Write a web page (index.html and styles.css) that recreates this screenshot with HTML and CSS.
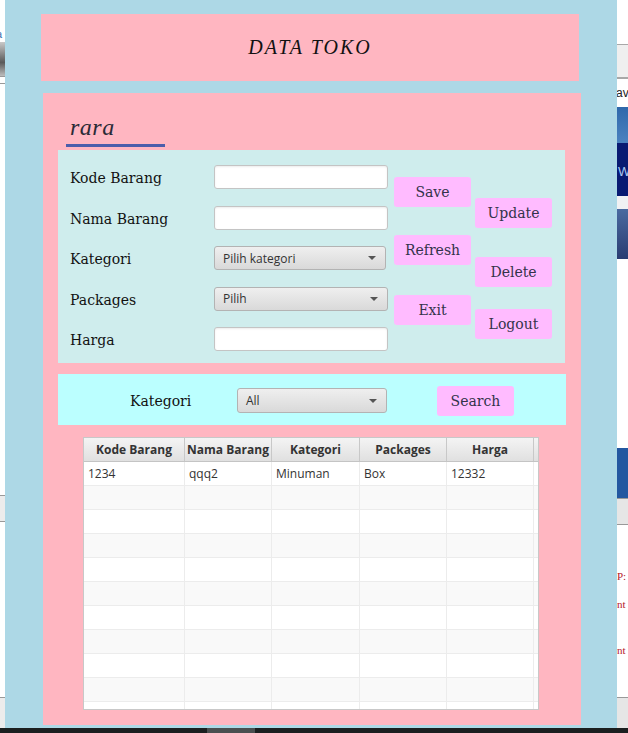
FILE: index.html
```html
<!DOCTYPE html>
<html lang="id">
<head>
<meta charset="utf-8">
<title>DATA TOKO</title>
<link rel="stylesheet" href="styles.css">
</head>
<body>
<div class="screen">
  <div class="desk-left">
    <div class="dl-text">a</div>
    <div class="dl-img"></div>
    <div class="dl-bar"></div>
    <div class="dl-fill"></div>
    <div class="dl-bar2"></div>
    <div class="dl-fill2"></div>
    <div class="dl-bar3"></div>
  </div>

  <div class="window">
    <header class="title-box"><h1 class="title">DATA TOKO</h1></header>

    <main class="main">
      <div class="user"><span class="user-name">rara</span></div>

      <section class="form-panel">
        <div class="fields">
          <label class="lbl">Kode Barang</label>
          <div class="input"></div>
          <label class="lbl">Nama Barang</label>
          <div class="input"></div>
          <label class="lbl">Kategori</label>
          <div class="combo combo-narrow"><span>Pilih kategori</span><i class="arrow"></i></div>
          <label class="lbl">Packages</label>
          <div class="combo"><span>Pilih</span><i class="arrow"></i></div>
          <label class="lbl">Harga</label>
          <div class="input"></div>
        </div>
        <div class="btn-col col1">
          <button class="btn b-save">Save</button>
          <button class="btn b-refresh">Refresh</button>
          <button class="btn b-exit">Exit</button>
        </div>
        <div class="btn-col col2">
          <button class="btn b-update">Update</button>
          <button class="btn b-delete">Delete</button>
          <button class="btn b-logout">Logout</button>
        </div>
      </section>

      <section class="search-panel">
        <label class="lbl s-lbl">Kategori</label>
        <div class="combo s-combo"><span>All</span><i class="arrow"></i></div>
        <button class="btn s-btn">Search</button>
      </section>

      <div class="table">
        <div class="thead row">
          <div class="th">Kode Barang</div>
          <div class="th">Nama Barang</div>
          <div class="th">Kategori</div>
          <div class="th">Packages</div>
          <div class="th">Harga</div>
          <div class="th filler"></div>
        </div>
        <div class="tbody">
          <div class="row tr"><div class="td">1234</div><div class="td">qqq2</div><div class="td">Minuman</div><div class="td">Box</div><div class="td">12332</div><div class="td"></div></div>
          <div class="row tr"><div class="td"></div><div class="td"></div><div class="td"></div><div class="td"></div><div class="td"></div><div class="td"></div></div>
          <div class="row tr"><div class="td"></div><div class="td"></div><div class="td"></div><div class="td"></div><div class="td"></div><div class="td"></div></div>
          <div class="row tr"><div class="td"></div><div class="td"></div><div class="td"></div><div class="td"></div><div class="td"></div><div class="td"></div></div>
          <div class="row tr"><div class="td"></div><div class="td"></div><div class="td"></div><div class="td"></div><div class="td"></div><div class="td"></div></div>
          <div class="row tr"><div class="td"></div><div class="td"></div><div class="td"></div><div class="td"></div><div class="td"></div><div class="td"></div></div>
          <div class="row tr"><div class="td"></div><div class="td"></div><div class="td"></div><div class="td"></div><div class="td"></div><div class="td"></div></div>
          <div class="row tr"><div class="td"></div><div class="td"></div><div class="td"></div><div class="td"></div><div class="td"></div><div class="td"></div></div>
          <div class="row tr"><div class="td"></div><div class="td"></div><div class="td"></div><div class="td"></div><div class="td"></div><div class="td"></div></div>
          <div class="row tr"><div class="td"></div><div class="td"></div><div class="td"></div><div class="td"></div><div class="td"></div><div class="td"></div></div>
          <div class="row tr"><div class="td"></div><div class="td"></div><div class="td"></div><div class="td"></div><div class="td"></div><div class="td"></div></div>
        </div>
      </div>
    </main>
  </div>

  <div class="desk-right">
    <div class="dr-top"></div>
    <div class="dr-toolbar"></div>
    <div class="dr-ava">ava</div>
    <div class="dr-blue1"></div>
    <div class="dr-navy">W</div>
    <div class="dr-light"></div>
    <div class="dr-blue2"></div>
    <div class="dr-white"></div>
    <div class="dr-blue3"></div>
    <div class="dr-grey"></div>
    <div class="dr-text">
      <div class="dr-l1">P:</div>
      <div class="dr-l2">nt</div>
      <div class="dr-l3">nt</div>
    </div>
    <div class="dr-grey2"></div>
  </div>
</div>
<div class="taskbar"><span class="task-item"></span></div>
</body>
</html>
```

FILE: styles.css
```css
* { box-sizing: border-box; }

html, body {
  margin: 0;
  padding: 0;
  background: #ffffff;
  width: 628px;
  height: 733px;
  overflow: hidden;
}

.screen {
  display: flex;
  height: 728px;
}

/* ---------- desktop behind (left strip) ---------- */
.desk-left {
  width: 5px;
  background: #ffffff;
  display: flex;
  flex-direction: column;
  overflow: hidden;
}
.dl-text {
  margin-top: 28px;
  height: 14px;
  font: 11px "Liberation Sans", sans-serif;
  color: #3a70b0;
  text-indent: -4px;
}
.dl-img {
  height: 34px;
  background: linear-gradient(180deg, #c8c8c8, #5a5a5a 60%, #bdbdbd);
}
.dl-bar { height: 8px; border-top: 1px solid #999; border-bottom: 1px solid #999; }
.dl-fill { height: 412px; background: #ffffff; border-bottom: 1px solid #999; }
.dl-bar2 { height: 26px; background: #ececec; border-bottom: 1px solid #999; }
.dl-fill2 { height: 176px; background: #ffffff; border-bottom: 1px solid #999; }
.dl-bar3 { flex: 1; background: #ececec; }

/* ---------- main window ---------- */
.window {
  width: 612px;
  background: #add8e6;
  padding: 14px 0 0 36px;
  display: flex;
  flex-direction: column;
}

.title-box {
  width: 538px;
  height: 67px;
  background: #ffb6c1;
  display: flex;
  align-items: center;
  justify-content: center;
}
.title {
  margin: 0 0 0 0;
  font: italic 400 20px "Liberation Serif", serif;
  letter-spacing: 2px;
  color: #111111;
}

.main {
  margin: 12px 0 0 2px;
  width: 538px;
  height: 632px;
  background: #ffb6c1;
  display: flex;
  flex-direction: column;
}

.user {
  margin-left: 23px;
  width: 99px;
  height: 54px;
  border-bottom: 3px solid #4b5dab;
  padding: 21px 0 0 4px;
}
.user-name {
  font: italic 400 24px "Liberation Serif", serif;
  color: #2a2a36;
  letter-spacing: 0.5px;
}

/* ---------- form panel ---------- */
.form-panel {
  margin: 3px 0 0 15px;
  width: 507px;
  height: 213px;
  background: #cfeded;
  display: flex;
  align-items: flex-start;
}

.fields {
  margin-top: 15px;
  padding-left: 12px;
  display: grid;
  grid-template-columns: 144px 174px;
  grid-auto-rows: 24px;
  row-gap: 16.5px;
}

.lbl {
  align-self: center;
  font: 14px "DejaVu Serif", serif;
  color: #111111;
  white-space: nowrap;
  padding-top: 2px;
}

.input {
  width: 174px;
  height: 24px;
  background: #ffffff;
  border: 1px solid #c4c4c4;
  border-radius: 3px;
  box-shadow: inset 0 1px 2px rgba(0, 0, 0, 0.08);
}

.combo {
  width: 174px;
  height: 24px;
  border: 1px solid #b3b3b3;
  border-radius: 3px;
  background: linear-gradient(180deg, #efefef, #d9d9d9);
  display: flex;
  align-items: center;
  justify-content: space-between;
  padding: 0 9px 0 8px;
  font: 12px "Open Sans", sans-serif;
  color: #333333;
}
.combo-narrow { width: 172px; }

.arrow {
  width: 0;
  height: 0;
  border-left: 4px solid transparent;
  border-right: 4px solid transparent;
  border-top: 4px solid #555555;
}

.btn-col {
  display: flex;
  flex-direction: column;
}
.col1 { margin: 27px 0 0 6px; }
.col2 { margin: 48px 0 0 4px; }

.btn {
  width: 77px;
  height: 30px;
  padding: 0;
  border: none;
  border-radius: 3px;
  background: #ffbbff;
  font: 14px "DejaVu Serif", serif;
  color: #33334a;
}
.b-refresh { margin-top: 28px; }
.b-exit { margin-top: 30px; }
.b-delete { margin-top: 29px; }
.b-logout { margin-top: 22px; }

/* ---------- search panel ---------- */
.search-panel {
  margin: 11px 0 0 15px;
  width: 508px;
  height: 51px;
  background: #bbffff;
  display: flex;
  align-items: center;
  padding-top: 2px;
}
.s-lbl {
  align-self: auto;
  width: 107px;
  margin-left: 72px;
  padding-top: 0;
}
.s-combo {
  width: 150px;
  height: 25px;
}
.s-btn { margin-left: 50px; }

/* ---------- table ---------- */
.table {
  margin: 12px 0 0 40px;
  width: 456px;
  height: 273px;
  border: 1px solid #c8c8c8;
  background: #ffffff;
  overflow: hidden;
}
.row {
  display: grid;
  grid-template-columns: 101px 87px 88px 87px 87px 1fr;
}
.thead {
  height: 24px;
  background: linear-gradient(180deg, #f4f4f4, #e0e0e0);
  border-bottom: 1px solid #c4c4c4;
}
.th {
  border-right: 1px solid #c8c8c8;
  display: flex;
  align-items: center;
  justify-content: center;
  font: 700 12px "Open Sans", sans-serif;
  color: #333333;
  white-space: nowrap;
}
.th.filler { border-right: none; }

.tr {
  height: 24px;
  border-bottom: 1px solid #ececec;
}
.tr:nth-child(even) { background: #f9f9f9; }
.td {
  border-right: 1px solid #ececec;
  padding-left: 4px;
  display: flex;
  align-items: center;
  font: 12px "Open Sans", sans-serif;
  color: #333333;
}
.td:last-child { border-right: none; }

/* ---------- desktop behind (right strip) ---------- */
.desk-right {
  width: 11px;
  display: flex;
  flex-direction: column;
  overflow: hidden;
  background: #ffffff;
}
.dr-top { height: 45px; background: #ffffff; border-bottom: 1px solid #a8a8a8; }
.dr-toolbar { height: 34px; background: #efefef; border-bottom: 2px solid #a8a8a8; }
.dr-ava {
  height: 28px;
  font: 12px "Liberation Sans", sans-serif;
  color: #222222;
  line-height: 28px;
  white-space: nowrap;
  text-indent: -1px;
}
.dr-blue1 { height: 36px; background: linear-gradient(180deg, #2f68ab, #4a82c0); }
.dr-navy {
  height: 53px;
  background: #081a72;
  color: #a9c8f2;
  font: 13px "Liberation Sans", sans-serif;
  line-height: 58px;
  text-indent: 1px;
}
.dr-light { height: 13px; background: #f0f1f3; }
.dr-blue2 { height: 50px; background: linear-gradient(180deg, #4a6aa0, #2a3c72); }
.dr-white { height: 189px; background: #ffffff; }
.dr-blue3 { height: 51px; background: #2357a0; border-bottom: 1px solid #999; }
.dr-grey { height: 26px; background: #e6e6e6; border-bottom: 1px solid #999; }
.dr-text {
  height: 172px;
  background: #ffffff;
  font: 11px "Liberation Serif", serif;
  color: #b5172a;
  white-space: nowrap;
}
.dr-l1 { margin-top: 45px; }
.dr-l2 { margin-top: 16px; }
.dr-l3 { margin-top: 34px; }
.dr-grey2 { flex: 1; background: #e6e6e6; border-top: 1px solid #999; }

/* ---------- taskbar ---------- */
.taskbar {
  height: 5px;
  background: #1b1f20;
  display: flex;
}
.task-item {
  margin-left: 207px;
  width: 48px;
  background: #4a4f50;
}
```
